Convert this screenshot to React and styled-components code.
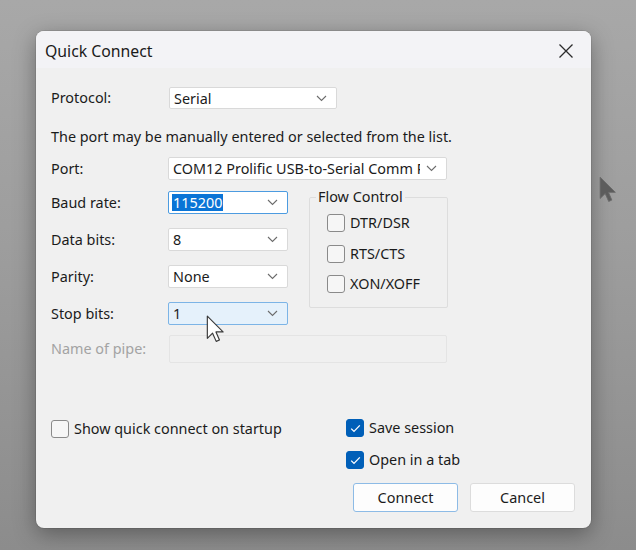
import React from 'react';
import styled, { createGlobalStyle } from 'styled-components';

const GlobalStyle = createGlobalStyle`
	html, body {
		margin: 0;
		padding: 0;
		background: #9c9c9c;
	}
	* {
		box-sizing: border-box;
	}
`

const Screen = styled.div`
	position: relative;
	width: 636px;
	height: 550px;
	padding: 31px 0 0 36px;
	overflow: hidden;
	background: linear-gradient(180deg, #a8a8a8 0%, #9d9d9d 45%, #8c8c8c 100%);
	font-family: "Noto Sans", "Open Sans", sans-serif;
	font-size: 14.4px;
	color: #1b1b1b;
`

const Dialog = styled.div`
	position: relative;
	display: flex;
	flex-direction: column;
	width: 555px;
	height: 497px;
	background: #f0f0f0;
	border-radius: 8px;
	overflow: hidden;
	box-shadow: 0 6px 22px rgba(0, 0, 0, 0.35), 0 0 0 1px rgba(0, 0, 0, 0.08);
`

const TitleBar = styled.div`
	display: flex;
	align-items: center;
	justify-content: space-between;
	height: 40px;
	padding: 2px 16px 0 9px;
	background: #f3f3f6;
`

const Title = styled.span`
	font-size: 15.8px;
	color: #1a1a1a;
`

const CloseButton = styled.div`
	display: flex;
	align-items: center;
	justify-content: center;
	width: 18px;
	height: 18px;
`

const Body = styled.div`
	flex: 1;
	display: flex;
	flex-direction: column;
	padding: 19px 16px 16px 15px;
`

const FieldRow = styled.div`
	display: grid;
	grid-template-columns: ${({$labelWidth}) => $labelWidth || 117}px auto;
	align-items: center;
	margin-top: ${({$top}) => $top || 0}px;
`

const Label = styled.span`
	color: ${({$muted}) => $muted ? '#a3a3a3' : '#1b1b1b'};
	line-height: 20px;
`

const Hint = styled.div`
	margin-top: 18px;
	line-height: 20px;
`

const Combo = styled.div`
	display: flex;
	align-items: center;
	justify-content: space-between;
	gap: 6px;
	width: ${({$width}) => $width}px;
	height: ${({$height}) => $height || 23}px;
	padding: 0 9px 0 3px;
	background: ${({$hover, $disabled}) => $hover ? '#e5f1fb' : $disabled ? '#f0f0f0' : '#ffffff'};
	border: 1px solid ${({$focus, $hover, $disabled}) =>
		$focus ? '#4c9be0' : $hover ? '#7cb4e6' : $disabled ? '#e4e4e4' : '#d9d9d9'};
	border-radius: 2px;
	white-space: nowrap;
	overflow: hidden;

	svg {
		flex-shrink: 0;
	}
`

const ComboText = styled.span`
	min-width: 0;
	overflow: hidden;
	line-height: 17px;
	padding: 0 1px;
	color: ${({$selected}) => $selected ? '#ffffff' : '#1b1b1b'};
	background: ${({$selected}) => $selected ? '#0a74d6' : 'transparent'};
`

const SerialBlock = styled.div`
	display: flex;
	gap: 21px;
	margin-top: 11px;
`

const SerialFields = styled.div`
	display: flex;
	flex-direction: column;
	gap: 14px;
`

const FlowGroup = styled.fieldset`
	width: 139px;
	height: 121px;
	margin: -4px 0 0 0;
	padding: 6px 0 0 17px;
	border: 1px solid #dddddd;
	border-radius: 2px;
	display: flex;
	flex-direction: column;
	gap: 10.5px;
`

const Legend = styled.legend`
	margin-left: -11px;
	padding: 0 2px;
	line-height: 20px;
`

const CheckRow = styled.label`
	display: flex;
	align-items: center;
	gap: 5px;
	height: 20px;
	line-height: 20px;
`

const Box = styled.span`
	display: flex;
	align-items: center;
	justify-content: center;
	width: 18px;
	height: 18px;
	border-radius: 3px;
	border: 1px solid ${({$checked}) => $checked ? '#005fb8' : '#8a8a8a'};
	background: ${({$checked}) => $checked ? '#005fb8' : '#f6f6f6'};
`

const Footer = styled.div`
	display: flex;
	justify-content: space-between;
	margin-top: 55px;
`

const FooterLeft = styled.div`
	padding-top: 1px;
`

const FooterRight = styled.div`
	display: flex;
	flex-direction: column;
	width: 229px;
	gap: 12px;
`

const Buttons = styled.div`
	display: flex;
	justify-content: flex-end;
	gap: 12px;
	margin-top: 1px;
`

const Button = styled.div`
	display: flex;
	align-items: center;
	justify-content: center;
	width: 105px;
	height: 29px;
	background: #fdfdfd;
	border: 1px solid ${({$primary}) => $primary ? '#8dbbe6' : '#dcdcdc'};
	border-radius: 3px;
	color: #1b1b1b;
`

const Pointer = styled.svg`
	position: absolute;
	left: ${({$x}) => $x}px;
	top: ${({$y}) => $y}px;
`

const Chevron = () => (
	<svg width="11" height="7" viewBox="0 0 11 7">
		<path d="M1 1l4.5 4.5L10 1" fill="none" stroke="#6d6d6d" strokeWidth="1.1" />
	</svg>
);

const Check = ({checked, children}) => (
	<CheckRow>
		<Box $checked={checked}>
			{checked && (
				<svg width="11" height="9" viewBox="0 0 11 9">
					<path d="M1.2 4.6l2.8 2.8L9.8 1.4" fill="none" stroke="#ffffff" strokeWidth="1.3" />
				</svg>
			)}
		</Box>
		{children}
	</CheckRow>
);

const Select = ({value, selected, ...rest}) => (
	<Combo {...rest}>
		<ComboText $selected={selected}>{value}</ComboText>
		{!rest.$disabled && <Chevron />}
	</Combo>
);

const ArrowPath = 'M1 1 L1 20 L5.5 15.6 L8.6 22.6 L11.4 21.4 L8.4 14.5 L14.5 14.5 Z';

const App = () => {
	return (
		<>
			<GlobalStyle />
			<Screen>
				<Dialog>
					<TitleBar>
						<Title>Quick Connect</Title>
						<CloseButton>
							<svg width="16" height="16" viewBox="0 0 16 16">
								<path d="M1.5 1.5l13 13M14.5 1.5l-13 13" stroke="#2b2b2b" strokeWidth="1.3" />
							</svg>
						</CloseButton>
					</TitleBar>
					<Body>
						<FieldRow $labelWidth={118}>
							<Label>Protocol:</Label>
							<Select value="Serial" $width={168} $height={22} />
						</FieldRow>
						<Hint>The port may be manually entered or selected from the list.</Hint>
						<FieldRow $top={10}>
							<Label>Port:</Label>
							<Select value="COM12 Prolific USB-to-Serial Comm Port" $width={279} />
						</FieldRow>
						<SerialBlock>
							<SerialFields>
								<FieldRow>
									<Label>Baud rate:</Label>
									<Select value="115200" selected $focus $width={120} />
								</FieldRow>
								<FieldRow>
									<Label>Data bits:</Label>
									<Select value="8" $width={120} />
								</FieldRow>
								<FieldRow>
									<Label>Parity:</Label>
									<Select value="None" $width={120} />
								</FieldRow>
								<FieldRow>
									<Label>Stop bits:</Label>
									<Select value="1" $hover $width={120} />
								</FieldRow>
							</SerialFields>
							<FlowGroup>
								<Legend>Flow Control</Legend>
								<Check>DTR/DSR</Check>
								<Check>RTS/CTS</Check>
								<Check>XON/XOFF</Check>
							</FlowGroup>
						</SerialBlock>
						<FieldRow $top={10} $labelWidth={118}>
							<Label $muted>Name of pipe:</Label>
							<Select value="" $disabled $width={278} $height={28} />
						</FieldRow>
						<Footer>
							<FooterLeft>
								<Check>Show quick connect on startup</Check>
							</FooterLeft>
							<FooterRight>
								<Check checked>Save session</Check>
								<Check checked>Open in a tab</Check>
								<Buttons>
									<Button $primary>Connect</Button>
									<Button>Cancel</Button>
								</Buttons>
							</FooterRight>
						</Footer>
					</Body>
					<Pointer $x={170} $y={284} width="19" height="28" viewBox="0 0 16 24">
						<path d={ArrowPath} fill="#ffffff" stroke="#3a3a3a" strokeWidth="1" strokeLinejoin="round" />
					</Pointer>
				</Dialog>
				<Pointer $x={599} $y={176} width="18" height="27" viewBox="0 0 16 24">
					<path d={ArrowPath} fill="#5c5c5c" stroke="#6a6a6a" strokeWidth="0.8" strokeLinejoin="round" />
				</Pointer>
			</Screen>
		</>
	);
};

export default App;
